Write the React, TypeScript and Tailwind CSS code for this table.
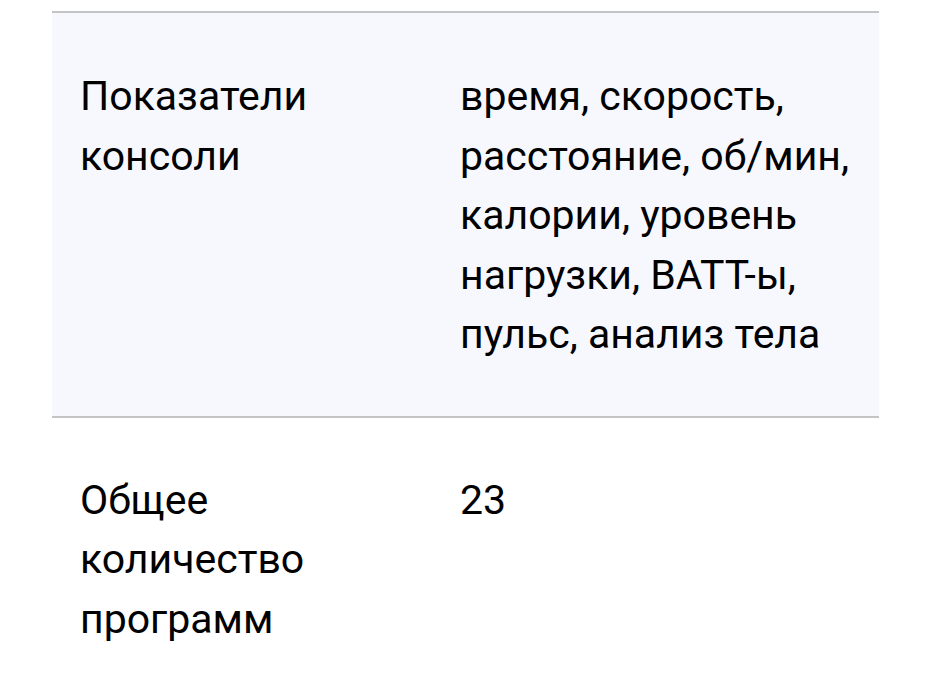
export default function App() {
  return (
    <div className="min-h-[700px] bg-white pl-[52px] pt-[11px]" style={{ fontFamily: 'Roboto, "Liberation Sans", sans-serif' }}>
      <div className="w-[827px] border-t-2 border-[#c4c4c4] text-[41px] leading-[59.5px] text-black">
        <div className="grid grid-cols-[408px_419px] border-b-2 border-[#c4c4c4] bg-[#f7f8fe] pt-[54px] pb-[51px]">
          <div className="pl-[28px] pr-[20px]">Показатели консоли</div>
          <div className="pr-[8px]">время, скорость, расстояние, об/мин, калории, уровень нагрузки, ВАТТ-ы, пульс, анализ тела</div>
        </div>
        <div className="grid grid-cols-[408px_419px] pt-[53px] pb-[52px]">
          <div className="pl-[28px] pr-[20px]">Общее количество программ</div>
          <div className="pr-[8px]">23</div>
        </div>
      </div>
    </div>
  );
}
